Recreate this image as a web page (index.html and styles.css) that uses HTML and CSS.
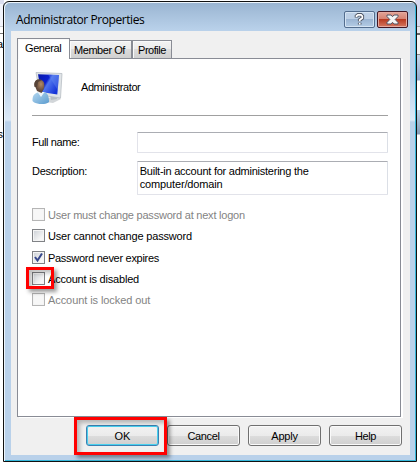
FILE: index.html
```html
<!DOCTYPE html>
<html lang="en">
<head>
<meta charset="utf-8">
<title>Administrator Properties</title>
<link rel="stylesheet" href="styles.css">
</head>
<body>
<div class="desktop">
  <div class="behind behind-left"><span class="behind-a">a</span><span class="behind-s">s</span></div>
  <div class="behind behind-right"></div>
  <main class="window">
    <header class="titlebar">
      <h1>Administrator Properties</h1>
      <div class="caption help">
        <svg width="11" height="13" viewBox="0 0 11 13"><path d="M2.500 4.500V3L4 1.800h3L8.300 3v2L5.700 7v1.300M5.700 9.800v1.700" fill="none" stroke="#525967" stroke-width="3.600"/><path d="M2.500 4V3L4 1.800h3L8.300 3v2L5.700 7v1.300M5.700 10v1.500" fill="none" stroke="#fff" stroke-width="1.700"/></svg>
      </div>
      <div class="caption close">
        <svg width="13" height="11" viewBox="0 0 13 11"><path d="M1 1h4l1.500 1.700L8 1h4v1.500L9.200 5.500 12 8.500V10H8L6.500 8.300 5 10H1V8.500L3.800 5.500 1 2.500z" fill="#f5f5f5" stroke="#535666"/></svg>
      </div>
    </header>
    <div class="client">
      <nav class="tabs">
        <div class="tab active"><span>General</span></div>
        <div class="tab member"><span>Member Of</span></div>
        <div class="tab profile"><span>Profile</span></div>
      </nav>
      <section class="page">
        <div class="identity">
          <svg class="user" width="32" height="33" viewBox="0 0 32 33">
            <defs>
              <linearGradient id="screen" x1="0" y1="0" x2="1" y2=".6"><stop offset="0" stop-color="#0818a8"/><stop offset=".45" stop-color="#0b20d0"/><stop offset=".55" stop-color="#4f75ee"/><stop offset="1" stop-color="#1634d8"/></linearGradient>
              <linearGradient id="shirt" x1="0" y1="0" x2="1" y2="1"><stop offset="0" stop-color="#b5d9f1"/><stop offset="1" stop-color="#5b9bce"/></linearGradient>
              <radialGradient id="face" cx=".65" cy=".35"><stop offset="0" stop-color="#b58c66"/><stop offset="1" stop-color="#61483a"/></radialGradient>
            </defs>
            <path d="M15 27l11-2 3 3-8 4-7-1z" fill="#d2d6d9"/>
            <path d="M18 24l6-1 1 5-6 1z" fill="#b6bdc3"/>
            <path d="M4 1.500L30 2.500 28.500 27 8 24z" fill="#e0e4e7" stroke="#b7bec4" stroke-width=".8"/>
            <path d="M6 3.300L27 4 25.300 23.500 9 21z" fill="url(#screen)"/>
            <path d="M16 3.600L27 4l-1.300 15z" fill="#668bf0" opacity=".4"/>
            <path d="M.5 29C.5 24 3 22 7 21h5c4 1 5 5 5 10-3 3-13 3-16.500-1z" fill="url(#shirt)"/>
            <path d="M5.500 21L9 26l3.500-5z" fill="#eef5fa"/>
            <path d="M2.500 14C2 9 6 7.500 9 9c4 1 4 6 2.500 9.500L9.500 22 5 20z" fill="url(#face)"/>
            <path d="M2.500 16C1.500 10 5 7.500 10 9L6 11l-1 5z" fill="#574439"/>
          </svg>
          <span class="t-admin">Administrator</span>
        </div>
        <div class="field"><label class="t-full">Full name:</label><div class="input"></div></div>
        <div class="field desc"><label class="t-desc">Description:</label><div class="input tall"><div class="t-line1">Built-in account for administering the</div><div class="t-line2">computer/domain</div></div></div>
        <div class="options">
          <div class="option off"><i class="box"></i><span class="t-must">User must change password at next logon</span></div>
          <div class="option"><i class="box"></i><span class="t-cannot">User cannot change password</span></div>
          <div class="option third"><i class="box"><svg width="11" height="11" viewBox="0 0 11 11"><path d="M2 5l2.500 3.500L9 1.500" fill="none" stroke="#36478c" stroke-width="2"/></svg></i><span class="t-never">Password never expires</span></div>
          <div class="option"><i class="box"></i><span class="t-disabled">Account is disabled</span><b class="mark mark-box"></b></div>
          <div class="option off"><i class="box"></i><span class="t-locked">Account is locked out</span></div>
        </div>
      </section>
      <footer class="buttons">
        <div class="button default"><span>OK</span><b class="mark mark-ok"></b></div>
        <div class="button"><span class="t-cancel">Cancel</span></div>
        <div class="button"><span class="t-apply">Apply</span></div>
        <div class="button"><span class="t-help">Help</span></div>
      </footer>
    </div>
  </main>
</div>
</body>
</html>
```
FILE: styles.css
```css
* { box-sizing: border-box; }
body { margin: 0; font: 11px/14px "Liberation Sans", Arial, sans-serif; color: #000; }
.desktop { position: relative; width: 420px; height: 462px; padding: 1px 3px 0; overflow: hidden; background: #fff; }
.behind { position: absolute; top: 0; height: 462px; overflow: hidden; }
.behind-left { left: 0; width: 4px; background: linear-gradient(#dcdff0 0 4px, #f2f4fb 4px 26px, #c9cbd3 26px 27px, #fff 27px 33px, #777 33px 34px, #fff 34px); }
.behind-right { right: 0; width: 5px; background: linear-gradient(#d7daf0 0 26px, #aaa 26px 27px, #e8e8ee 27px 33px, #666 33px 35px, #f3f3f3 35px 54px, #888 54px 55px, #c5d7ec 55px, #91aace 80px, #fff 81px 110px, #bcd4ec 110px, #879eb8 134px, #fff 135px); }
.behind-a, .behind-s { position: absolute; right: 1px; }
.behind-a { top: 37px; }
.behind-s { top: 127px; }

.window {
  position: relative; width: 414px; height: 461px; padding: 0 6px 6px 7px; border: 1px solid #111; border-radius: 6px 6px 0 0;
  background: linear-gradient(#99b4d1 0, #b9d1ea 28px, #b9d1ea 75px, #dce9f7 118px, #b9d1ea 120px);
  box-shadow: inset 1px 1px #edf5fc, inset -1px -1px #35b7da;
}
.titlebar { display: flex; height: 29px; align-items: flex-start; padding: 9px 2px 0 5px; }
.titlebar h1 { flex: 1; margin: 0; font: 12px/17px "Open Sans", sans-serif; letter-spacing: -.43px; white-space: nowrap; }
.caption { display: flex; align-items: center; justify-content: center; width: 31px; height: 17px; border: 1px solid #536d8e; border-radius: 2px; box-shadow: inset 0 0 0 1px #d5e4f3; background: linear-gradient(#bdd0e6 50%, #9bb5d3 50%, #b4cce5); }
.close { margin-left: 2px; border-color: #421724; background: linear-gradient(#e3a396 0, #d5806f 50%, #b83b22 50%, #d57862); box-shadow: inset 0 0 0 1px #e5aaa0; }

.client { width: 399px; height: 424px; padding: 7px 6px 0; background: #f0f0f0; }
.tabs { display: flex; align-items: flex-end; height: 20px; }
.tab { height: 18px; border: 1px solid #898c95; border-left: 0; border-bottom: 0; background: linear-gradient(#f3f3f3, #ebebeb 50%, #dcdcdc 50%, #d0d0d0); box-shadow: inset 1px 1px #fafafa; line-height: 18px; letter-spacing: -.45px; white-space: nowrap; }
.tab.active { position: relative; z-index: 1; width: 53px; height: 21px; margin-bottom: -1px; border-left: 1px solid #898c95; padding-left: 7px; background: #fff; line-height: 19px; letter-spacing: -.4px; }
.member { width: 62px; padding-left: 4px; }
.profile { width: 40px; padding-left: 5px; border-left: 1px solid #898c95; }
.page { width: 384px; height: 359px; padding: 12px 12px 0 14px; border: 1px solid #898c95; margin-right: -2px; background: #fff; box-shadow: 2px 1px #fff; width: 384px; }
.identity { display: flex; align-items: center; width: 356px; height: 45px; padding-bottom: 12px; border-bottom: 1px solid #a0a0a0; }
.user { flex: none; }
.t-admin { margin-left: 17px; letter-spacing: -.42px; }
.field { display: flex; height: 21px; margin-top: 16px; white-space: nowrap; }
.field label { width: 105px; padding-top: 3px; }
.input { width: 252px; height: 21px; border: 1px solid #e2e3ea; border-top-color: #abadb3; border-right-color: #dbdfe6; border-radius: 1px; }
.desc { height: 34px; margin-top: 8px; }
.tall { height: 34px; padding: 3px 2px; line-height: 13px; }
.options { margin-top: 9px; }
.option { position: relative; display: flex; align-items: center; height: 21px; white-space: nowrap; }
.option.third { height: 22px; padding-top: 1px; }
.box { display: block; flex: none; width: 13px; height: 13px; margin-right: 3px; border: 1px solid #808286; background: linear-gradient(135deg, #cbcfd5, #f6f6f6 75%); box-shadow: inset 0 0 0 1px #f4f4f4; }
.box svg { display: block; }
.off { color: #838383; }
.off .box { border-color: #b5b5b5; background: #f7f7f7; }
.t-full { letter-spacing: -.4px; }
.t-desc { letter-spacing: -.25px; }
.t-line1 { letter-spacing: -.24px; }
.t-line2 { letter-spacing: -.14px; }
.t-must { letter-spacing: -.22px; }
.t-cannot { letter-spacing: -.17px; }
.t-never { letter-spacing: -.29px; }
.t-disabled { letter-spacing: -.2px; }
.t-locked { letter-spacing: -.08px; }
.t-cancel, .t-help { letter-spacing: -.4px; }
.t-apply { letter-spacing: -.25px; }
.buttons { display: flex; gap: 8px; margin: 8px 0 0 69px; }
.button { position: relative; display: flex; align-items: center; justify-content: center; flex: none; width: 73px; height: 21px; border: 1px solid #707070; border-radius: 3px; background: linear-gradient(#f2f2f2, #ebebeb 50%, #dddddd 50%, #cfcfcf); box-shadow: inset 0 0 0 1px #fafafa; }
.default { border-color: #3c7fb1; box-shadow: inset 0 0 0 1px #48d0ee; }
.mark { position: absolute; z-index: 2; border: 3px solid #f00; box-shadow: 3px 3px 4px rgba(0,0,0,.4), inset 3px 3px 4px rgba(0,0,0,.25); }
.mark-box { left: -6px; top: -1px; width: 28px; height: 22px; }
.mark-ok { left: -13px; top: -9px; width: 93px; height: 38px; }
```
